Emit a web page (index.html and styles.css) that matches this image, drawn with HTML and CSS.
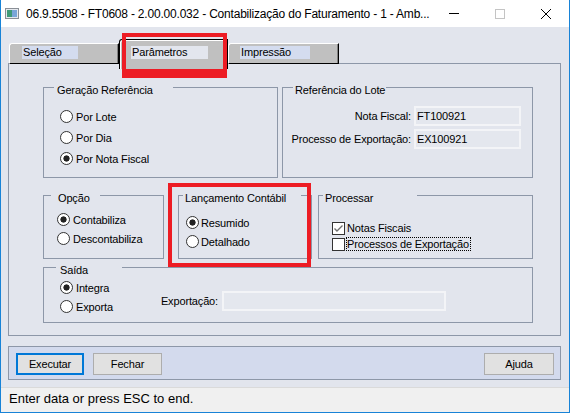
FILE: index.html
```html
<!DOCTYPE html>
<html lang="pt">
<head>
    <meta charset="UTF-8">
    <title>Contabilização do Faturamento</title>
    <link rel="stylesheet" href="styles.css">
</head>
<body>
    <div class="window">
        <div class="titlebar">
            <svg class="app-icon" width="14" height="11" viewBox="0 0 14 11">
                <rect x="0.5" y="0.5" width="13" height="10" fill="#e6e9ee" stroke="#8a8f96"/>
                <rect x="2" y="2" width="5" height="7" fill="#3f9a78"/>
                <rect x="7" y="2" width="5" height="7" fill="#7aa6d8"/>
            </svg>
            <span class="title">06.9.5508 - FT0608 - 2.00.00.032 - Contabilização do Faturamento - 1 - Amb...</span>
            <div class="caption-buttons">
                <span class="cbtn"><svg width="10" height="1"><rect width="10" height="1" fill="#000"/></svg></span>
                <span class="cbtn"><svg width="10" height="10"><rect x="0.5" y="0.5" width="9" height="9" fill="none" stroke="#c4c4c4"/></svg></span>
                <span class="cbtn"><svg width="10" height="10"><path d="M0 0L10 10M10 0L0 10" stroke="#000" stroke-width="1"/></svg></span>
            </div>
        </div>

        <div class="client">
            <div class="tabstrip">
                <div class="tab tab-sel"><span class="tab-label">Seleção</span></div>
                <div class="tab tab-par active"><span class="tab-label">Parâmetros</span></div>
                <div class="tab tab-imp"><span class="tab-label">Impressão</span></div>
            </div>

            <div class="panel">
                <div class="row">
                    <div class="group g-geracao">
                        <div class="cap">Geração Referência</div>
                        <div class="opts">
                            <div class="opt"><span class="radio"></span>Por Lote</div>
                            <div class="opt"><span class="radio"></span>Por Dia</div>
                            <div class="opt"><span class="radio on"></span>Por Nota Fiscal</div>
                        </div>
                    </div>
                    <div class="group g-lote">
                        <div class="cap">Referência do Lote</div>
                        <div class="lote">
                            <span class="lbl">Nota Fiscal:</span>
                            <span class="field">FT100921</span>
                            <span class="lbl">Processo de Exportação:</span>
                            <span class="field">EX100921</span>
                        </div>
                    </div>
                </div>

                <div class="row row-mid">
                    <div class="group g-opcao">
                        <div class="cap">Opção</div>
                        <div class="opts">
                            <div class="opt"><span class="radio on"></span>Contabiliza</div>
                            <div class="opt"><span class="radio"></span>Descontabiliza</div>
                        </div>
                    </div>
                    <div class="group g-lanc">
                        <div class="cap">Lançamento Contábil</div>
                        <div class="opts">
                            <div class="opt"><span class="radio on"></span>Resumido</div>
                            <div class="opt"><span class="radio"></span>Detalhado</div>
                        </div>
                    </div>
                    <div class="group g-proc">
                        <div class="cap">Processar</div>
                        <div class="checks">
                            <div class="chk-row">
                                <span class="check"><svg width="11" height="11" viewBox="0 0 11 11"><path d="M1.5 5.5l2.5 2.5 5.5-5.5" fill="none" stroke="#707070" stroke-width="1.4"/></svg></span>
                                <span class="chk-text">Notas Fiscais</span>
                            </div>
                            <div class="chk-row">
                                <span class="check"></span>
                                <span class="chk-text focus">Processos de Exportação</span>
                            </div>
                        </div>
                    </div>
                </div>

                <div class="row row-out">
                    <div class="group g-saida">
                        <div class="cap">Saída</div>
                        <div class="saida-body">
                            <div class="opts">
                                <div class="opt"><span class="radio on"></span>Integra</div>
                                <div class="opt"><span class="radio"></span>Exporta</div>
                            </div>
                            <div class="export">
                                <span class="lbl export-lbl">Exportação:</span>
                                <span class="field export-field"></span>
                            </div>
                        </div>
                    </div>
                </div>
            </div>

            <div class="buttonbar">
                <span class="btn btn-exec">Executar</span>
                <span class="btn btn-close">Fechar</span>
                <span class="btn btn-help">Ajuda</span>
            </div>
        </div>

        <div class="statusbar">Enter data or press ESC to end.</div>

        <div class="mark mark-tab"></div>
        <div class="mark mark-lanc"></div>
    </div>
</body>
</html>
```

FILE: styles.css
```css
* {
    box-sizing: border-box;
}

body {
    margin: 0;
    font-family: "Liberation Sans", Arial, sans-serif;
    font-size: 11px;
    letter-spacing: -0.15px;
    color: #000;
    background: #e2e5ed;
}

.window {
    position: relative;
    width: 570px;
    height: 413px;
    display: flex;
    flex-direction: column;
    background: #e2e5ed;
    border: 1px solid #1883d7;
    border-top: none;
}

/* title bar */
.titlebar {
    flex: none;
    height: 27px;
    display: flex;
    align-items: center;
    background: #fff;
}

.app-icon {
    flex: none;
    margin-left: 4px;
}

.title {
    flex: 1;
    margin: 1px 0 0 7px;
    font-size: 12px;
    line-height: 14px;
    letter-spacing: -0.2px;
    white-space: nowrap;
    overflow: hidden;
}

.caption-buttons {
    display: flex;
    align-self: stretch;
}

.cbtn {
    width: 46px;
    display: flex;
    align-items: center;
    justify-content: center;
}

/* client area */
.client {
    flex: 1;
    display: flex;
    flex-direction: column;
    padding: 0 8px 0 7px;
}

.tabstrip {
    flex: none;
    height: 37px;
    display: flex;
    align-items: flex-end;
    border-bottom: 1px solid #8d97a8;
}

.tab {
    height: 21px;
    margin-bottom: -1px;
    padding: 2px 0 0 11px;
    background: #c0c0c0;
    border-top: 1px solid #fff;
    border-left: 1px solid #fff;
    border-right: 1px solid #000;
    border-bottom: 1px solid #000;
    border-top-left-radius: 3px;
    box-shadow: inset -1px 0 #808080;
}

.tab-sel {
    width: 110px;
    margin-left: 1px;
    padding-left: 12px;
}

.tab-par {
    width: 109px;
}

.tab-imp {
    width: 111px;
}

.tab.active {
    height: 30px;
    margin-bottom: -6px;
    padding-top: 6px;
    border-top-color: #000;
    border-left-color: #000;
    border-bottom: none;
    box-shadow: inset 1px 1px #fff, inset -1px 0 #808080;
}

.tab-label {
    display: block;
    height: 13px;
    line-height: 13px;
    padding-left: 1px;
    background: #d4dcef;
    white-space: nowrap;
}

.tab-sel .tab-label { width: 56px; }
.tab-par .tab-label { width: 77px; background: #e3e6ee; }
.tab-imp .tab-label { width: 70px; }

.panel {
    flex: none;
    padding: 23px 27px 12px 34px;
    border: 1px solid #8d97a8;
    border-top: none;
}

.row {
    display: flex;
}

.row-mid {
    margin-top: 17px;
}

.row-out {
    margin-top: 8px;
}

/* group boxes */
.group {
    border: 1px solid #8d97a8;
}

.cap {
    height: 13px;
    margin-top: -4px;
    line-height: 13px;
    background: #e2e5ed;
    white-space: nowrap;
}

.g-geracao { width: 235px; height: 91px; }
.g-geracao .cap { width: 119px; margin-left: 10px; padding-left: 3px; }
.g-geracao .opts { margin-top: 9px; padding-left: 16px; }
.g-geracao .opt { height: 21px; }

.g-lote { width: 251px; height: 91px; margin-left: 4px; }
.g-lote .cap { width: 93px; margin-left: 10px; padding-left: 2px; }

.g-opcao { width: 121px; height: 64px; }
.g-opcao .cap { width: 49px; margin-left: 7px; padding-left: 7px; }
.g-opcao .opts { margin-top: 5px; padding-left: 13px; }

.g-lanc { width: 134px; height: 64px; margin-left: 14px; }
.g-lanc .cap { width: 118px; margin-left: 4px; padding-left: 2px; }
.g-lanc .opts { margin-top: 8px; padding-left: 7px; }
.g-lanc .radio { margin-right: 2px; }

.g-proc { width: 215px; height: 64px; margin-left: 6px; }
.g-proc .cap { width: 94px; margin-left: 4px; padding-left: 2px; }

.g-saida { width: 490px; height: 56px; }
.g-saida .cap { width: 66px; margin-left: 12px; padding-left: 4px; }

.opts {
    display: flex;
    flex-direction: column;
}

.opt {
    height: 19px;
    display: flex;
    align-items: center;
    white-space: nowrap;
}

.radio {
    flex: none;
    width: 13px;
    height: 13px;
    margin-right: 3px;
    border: 1px solid #333;
    border-radius: 50%;
    background: #fff;
}

.radio.on {
    background: radial-gradient(circle, #222 0 2.8px, #fff 3.4px);
}

.checks {
    margin-top: 15px;
    padding-left: 13px;
}

.chk-row {
    height: 16px;
    display: flex;
    align-items: center;
}

.check {
    flex: none;
    width: 13px;
    height: 13px;
    margin-right: 1px;
    display: flex;
    align-items: center;
    justify-content: center;
    border: 1px solid #333;
    background: #fff;
}

.chk-text {
    line-height: 12px;
    padding-right: 1px;
    border: 1px dotted transparent;
    white-space: nowrap;
}

.chk-text.focus {
    border-color: #000;
}

/* fields */
.lote {
    display: grid;
    grid-template-columns: auto 107px;
    justify-content: end;
    align-items: center;
    column-gap: 3px;
    row-gap: 3px;
    margin-top: 9px;
    padding-right: 11px;
}

.lbl {
    text-align: right;
    white-space: nowrap;
}

.field {
    display: block;
    height: 20px;
    padding-left: 1px;
    line-height: 16px;
    border: 2px solid #f3f4f7;
    background: #e4e7ee;
}

.saida-body {
    display: flex;
}

.saida-body .opts {
    width: 116px;
    margin-top: 1px;
    padding-left: 16px;
}

.export {
    display: flex;
    align-items: center;
    margin-top: 14px;
    align-self: flex-start;
}

.export-lbl {
    width: 58px;
}

.export-field {
    width: 224px;
    margin-left: 4px;
}

/* buttons */
.buttonbar {
    flex: none;
    height: 34px;
    margin-top: 10px;
    padding: 6px 6px 0 7px;
    display: flex;
    align-items: flex-start;
    border: 1px solid #8d97a8;
    background: #d3daed;
}

.btn {
    height: 22px;
    display: flex;
    align-items: center;
    justify-content: center;
    border: 1px solid #adadad;
    background: #e1e1e1;
}

.btn-exec {
    width: 68px;
    border: 2px solid #0078d7;
}

.btn-close {
    width: 69px;
    margin-left: 9px;
}

.btn-help {
    width: 70px;
    margin-left: auto;
}

.statusbar {
    flex: none;
    height: 25px;
    padding-left: 8px;
    font-size: 13px;
    line-height: 22px;
    letter-spacing: 0;
    border-top: 1px solid #dadada;
    background: #f0f0f0;
}

/* red highlight boxes drawn over the dialog */
.mark {
    position: absolute;
    border: 4px solid #ed1c24;
}

.mark-tab {
    left: 121px;
    top: 33px;
    width: 105px;
    height: 45px;
    border-bottom-width: 9px;
}

.mark-lanc {
    left: 167px;
    top: 183px;
    width: 143px;
    height: 84px;
}
```
